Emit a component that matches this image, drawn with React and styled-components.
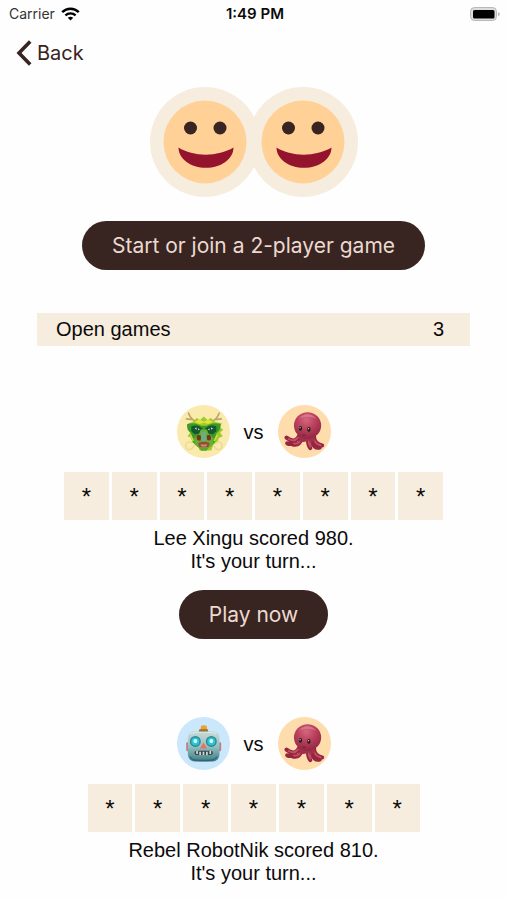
import React from 'react';
import styled, { createGlobalStyle } from 'styled-components';

const colors = {
    page: '#fefefe',
    cream: '#f6eddf',
    dark: '#382421',
    button_text: '#ecd9cf',
    text: '#0c0a0a',
};

const GlobalStyle = createGlobalStyle`
    * {
        box-sizing: border-box;
    }
    body {
        margin: 0;
        background: ${colors.page};
        color: ${colors.text};
        font-family: 'Liberation Sans', Arial, sans-serif;
        font-size: 20px;
    }
`;

const Screen = styled.div`
    display: flex;
    flex-direction: column;
    overflow-x: hidden;

    svg {
        display: block;
        flex: none;
    }
`;

const StatusBar = styled.header`
    display: grid;
    grid-template-columns: 1fr auto 1fr;
    align-items: center;
    height: 28px;
    padding: 0 6px 0 9px;
    font-family: Inter, sans-serif;
    font-size: 14px;
    line-height: 20px;

    .carrier {
        display: flex;
        align-items: center;
        gap: 6px;
        color: #333;
    }
    .time {
        font-size: 15px;
        font-weight: 600;
    }
    .battery {
        justify-self: end;
    }
`;

const BackLink = styled.a`
    display: flex;
    align-items: center;
    align-self: flex-start;
    gap: 5px;
    height: 50px;
    padding-left: 16px;
    color: ${colors.dark};
    font-family: Inter, sans-serif;
    font-size: 20px;
    text-decoration: none;
`;

const Main = styled.main`
    display: flex;
    flex-direction: column;
    align-items: center;
    padding: 9px 37px 16px;
`;

const PillButton = styled.button`
    height: 49px;
    margin-top: ${props => props.$gap}px;
    padding: 0 30px;
    border: 0;
    border-radius: 25px;
    background: ${colors.dark};
    color: ${colors.button_text};
    font-family: Inter, sans-serif;
    font-size: 21px;
    cursor: pointer;
`;

const SectionHeader = styled.h2`
    display: flex;
    justify-content: space-between;
    width: 100%;
    margin: 43px 0 0;
    padding: 0 26px 0 19px;
    background: ${colors.cream};
    font-size: 20px;
    font-weight: 400;
    line-height: 33px;
`;

const GameCard = styled.section`
    display: flex;
    flex-direction: column;
    align-items: center;
    width: 100%;
    margin-top: ${props => props.$gap}px;
`;

const Versus = styled.div`
    display: flex;
    align-items: center;
    gap: 14px;
    line-height: 24px;
`;

const Tiles = styled.div`
    display: grid;
    grid-template-columns: repeat(${props => props.$count}, 1fr);
    gap: 3px;
    width: calc(${props => props.$count} * 47px + 3px);
    max-width: 100%;
    margin-top: 14px;
`;

const Tile = styled.span`
    height: 48px;
    background: ${colors.cream};
    font-size: 24px;
    line-height: 50px;
    text-align: center;
`;

const Result = styled.p`
    margin: 7px 0 0;
    line-height: 23px;
    text-align: center;
`;

const WifiIcon = () => (
    <svg width="19" height="14" viewBox="0 0 19 14" fill="none" stroke="#000" aria-hidden="true">
        <path d="M1.2 5.2C5.8.6 13.2.6 17.8 5.2" strokeWidth="2.4" />
        <path d="M4.4 8.4c2.9-2.8 7.3-2.8 10.2 0" strokeWidth="2.3" />
        <path d="M6.8 10.7c1.6-1.4 3.8-1.4 5.4 0L9.5 13.6z" fill="#000" stroke="none" />
    </svg>
);

const BatteryIcon = () => (
    <svg className="battery" width="32" height="16" viewBox="0 0 32 16" role="img" aria-label="Battery full">
        <rect x="1.5" y="1.5" width="26" height="13" rx="4" fill="#dcdcdc" stroke="#b8b8b8" />
        <rect x="4" y="4" width="21.5" height="8.5" rx="1.5" fill="#000" />
        <path d="M29.2 6c2 .8 2 3.4 0 4.2z" fill="#aaa" />
    </svg>
);

const BackIcon = () => (
    <svg width="16" height="26" viewBox="0 0 16 26" fill="none" stroke={colors.dark} strokeWidth="3.6" aria-hidden="true">
        <path d="M14.2 1.4L3 13l11.200 11.600" />
    </svg>
);

const Face = ({ x }) => (
    <g transform={`translate(${x} 0)`}>
        <circle cx="55" cy="55" r="41.5" fill="#ffd197" />
        <circle cx="40.5" cy="41" r="6.5" fill={colors.dark} />
        <circle cx="70" cy="41" r="6.5" fill={colors.dark} />
        <path d="M28.500 60.500C43 70 68 70 83.500 60.500C83.500 72 71 80.800 56 80.800S28.500 72 28.500 60.500z" fill="#93142c" />
    </g>
);

const PlayerFaces = () => (
    <svg width="208" height="110" viewBox="0 0 208 110" role="img" aria-label="Two players">
        <circle cx="55" cy="55" r="55" fill={colors.cream} />
        <circle cx="153" cy="55" r="55" fill={colors.cream} />
        <Face x={0} />
        <Face x={98} />
    </svg>
);

const Dragon = () => (
    <svg width="53" height="53" viewBox="0 0 156 156" role="img" aria-label="Dragon">
        <circle cx="78" cy="78" r="78" fill="#faeaae" />
        <g fill="none" stroke="#bfa568" strokeWidth="5" strokeLinecap="round">
            <path d="M58 50C46 44 38 36 34 24M46 43l-18-2M100 50c12-6 20-14 24-26M112 43l18-2" />
        </g>
        <path d="M46 50l12-12 10 6 11-10 11 10 10-6 12 12 20 4-6 12 10 6-9 10 8 10-12 5-4 14-12 5-6 18H67l-8-18-12-5-4-14-12-5 8-10-9-10 10-6-6-12z" fill="#9dcb2c" />
        <path d="M30 56c17-5 29-2 41 5h16c12-7 24-10 41-5 2 14-4 22-12 27 2 12-1 22-7 29l-13 12H62l-13-12c-6-7-9-17-7-29-8-5-14-13-12-27z" fill="#3d9a2a" />
        <path d="M42 63c12-5 24-3 33 6l-3 14-20 3-10-9zM116 63c-12-5-24-3-33 6l3 14 20 3 10-9z" fill="#135a28" />
        <path d="M52 49l14-7 13 7 13-7 14 7-14 7-13-4-13 4z" fill="#e2e23a" />
        <path d="M52 68q8-4 15 4-8 6-15-4zM106 68q-8-4-15 4 8 6 15-4z" fill="#e2f4f2" />
        <circle cx="60" cy="71" r="3" fill="#11343a" />
        <circle cx="98" cy="71" r="3" fill="#11343a" />
        <path d="M70 72h18l6 15 14 10-2 19-12 9H64l-12-9-2-19 14-10z" fill="#69ad32" />
        <path d="M59 90c9-5 14 1 12 13-9 5-16-1-12-13zM87 90c9-5 16 0 12 13-9 4-15-1-12-13z" fill="#7d3023" />
        <path d="M72 78h14l2 24-9 7-9-7z" fill="#69b179" />
        <path d="M62 113c10-6 24-6 34 0l-4 11H66z" fill="#9a4838" />
        <path d="M69 116h20l-3 6H72z" fill="#d8877b" />
        <path d="M64 124h30l-7 11H71z" fill="#58a82e" />
        <path d="M40 88l8 18M118 88l-8 18" stroke="#d1df3a" strokeWidth="5" fill="none" />
        <path d="M50 120c-9 18-27 12-24-3 2-9 13-12 19-4M108 120c9 18 27 12 24-3-2-9-13-12-19-4" fill="none" stroke="#ecd98c" strokeWidth="4" strokeLinecap="round" />
    </svg>
);

const Octopus = () => (
    <svg width="53" height="53" viewBox="0 0 156 156" role="img" aria-label="Octopus">
        <defs>
            <radialGradient id="octopus-head" cx="45%" cy="28%" r="75%">
                <stop offset="0" stopColor="#d4687f" />
                <stop offset=".45" stopColor="#bd405d" />
                <stop offset="1" stopColor="#8d2742" />
            </radialGradient>
        </defs>
        <circle cx="78" cy="78" r="78" fill="#fedcab" />
        <g fill="none" strokeLinecap="round" strokeLinejoin="round">
            <path d="M62 91c-5 15-20 19-37 5M50 109c-9 8-16 7-23 4M70 98c-4 14-13 21-27 18M88 99c0 14 2 21 7 28M106 93c0 15 8 23 24 26M101 108c2 13 10 20 22 17" stroke="#96263f" strokeWidth="12" />
            <path d="M59 96c-7 9-17 10-28 4M66 106c-5 7-12 9-19 7M90 106c0 8 2 13 5 17M107 103c3 10 9 13 19 16" stroke="#c4506a" strokeWidth="5" />
        </g>
        <path d="M57 82c8 15 7 23 8 27 12 1 20-1 24-7 7 8 14 8 21 2-4-9 0-17 4-25z" fill="#a3304b" />
        <ellipse cx="87" cy="60" rx="40" ry="39" fill="url(#octopus-head)" />
        <path d="M62 40c6-9 19-15 32-12 9 2 15 7 18 13-14-8-34-8-50-1z" fill="#e7a3b1" opacity=".45" />
        <ellipse cx="66" cy="68" rx="7" ry="8" fill="#a85a5c" />
        <ellipse cx="91" cy="71" rx="7" ry="8" fill="#a85a5c" />
        <ellipse cx="66" cy="69" rx="5" ry="7" fill="#2b151a" />
        <ellipse cx="91" cy="72" rx="5" ry="7" fill="#2b151a" />
        <circle cx="65" cy="67" r="2" fill="#e6c8c6" />
        <circle cx="90" cy="70" r="2" fill="#e6c8c6" />
        <path d="M72 88c3 2 6 2 9 0" fill="none" stroke="#761a32" strokeWidth="3" />
    </svg>
);

const Robot = () => (
    <svg width="53" height="53" viewBox="0 0 156 156" role="img" aria-label="Robot">
        <defs>
            <linearGradient id="robot-head" x1="0" y1="0" x2="0" y2="1">
                <stop offset="0" stopColor="#c9dcd8" />
                <stop offset=".5" stopColor="#96c1c2" />
                <stop offset="1" stopColor="#3d7d86" />
            </linearGradient>
        </defs>
        <circle cx="78" cy="78" r="78" fill="#cae7fb" />
        <rect x="27" y="74" width="10" height="27" rx="4" fill="#b97f83" />
        <rect x="120" y="74" width="10" height="27" rx="4" fill="#b97f83" />
        <rect x="32" y="41" width="93" height="90" rx="20" fill="url(#robot-head)" />
        <path d="M40 51c6-6 19-7 38-7s32 1 38 7" fill="none" stroke="#e1eae8" strokeWidth="3" />
        <path d="M69 38l2-12q8-4 16 0l2 12z" fill="#eda22c" />
        <path d="M66 36h24l2 7H64z" fill="#96703a" />
        <circle cx="54" cy="72" r="16" fill="#33858d" />
        <circle cx="101" cy="72" r="16" fill="#33858d" />
        <circle cx="54" cy="72" r="12" fill="#25c5da" />
        <circle cx="101" cy="72" r="12" fill="#25c5da" />
        <circle cx="54" cy="71" r="6" fill="#d5f9fb" />
        <circle cx="101" cy="71" r="6" fill="#d5f9fb" />
        <path d="M78 75l10 18H68z" fill="#f06c65" />
        <rect x="52" y="99" width="53" height="13" rx="5" fill="#37474c" />
        <path d="M59 99v10M68 102v10M78 102v10M88 102v10M98 99v10" stroke="#cfdcd5" strokeWidth="5" />
        <path d="M38 117c7 11 18 11 40 11s33 0 40-11" fill="none" stroke="#2f6470" strokeWidth="4" />
    </svg>
);

const games = [
    { opponent: 'Lee Xingu', Avatar: Dragon, score: 980, letters: 8, gap: 59, playable: true },
    { opponent: 'Rebel RobotNik', Avatar: Robot, score: 810, letters: 7, gap: 78, playable: false },
];

/**
 * One open game: both avatars, the masked word and whose turn it is.
 */
const Game = ({ opponent, Avatar, score, letters, gap, playable }) => (
    <GameCard $gap={gap}>
        <Versus>
            <Avatar />
            <span>vs</span>
            <Octopus />
        </Versus>
        <Tiles $count={letters}>
            {Array.from({ length: letters }, (_, i) => (
                <Tile key={i}>*</Tile>
            ))}
        </Tiles>
        <Result>
            {opponent} scored {score}.<br />
            It's your turn...
        </Result>
        {playable && <PillButton type="button" $gap={17}>Play now</PillButton>}
    </GameCard>
);

const App = () => {
    return (
        <Screen>
            <GlobalStyle />
            <StatusBar>
                <div className="carrier">
                    Carrier
                    <WifiIcon />
                </div>
                <div className="time">1:49 PM</div>
                <BatteryIcon />
            </StatusBar>
            <BackLink href="#back">
                <BackIcon />
                Back
            </BackLink>
            <Main>
                <PlayerFaces />
                <PillButton type="button" $gap={24}>Start or join a 2-player game</PillButton>
                <SectionHeader>
                    <span>Open games</span>
                    <span>3</span>
                </SectionHeader>
                {games.map(game => (
                    <Game key={game.opponent} {...game} />
                ))}
            </Main>
        </Screen>
    );
};

export default App;
